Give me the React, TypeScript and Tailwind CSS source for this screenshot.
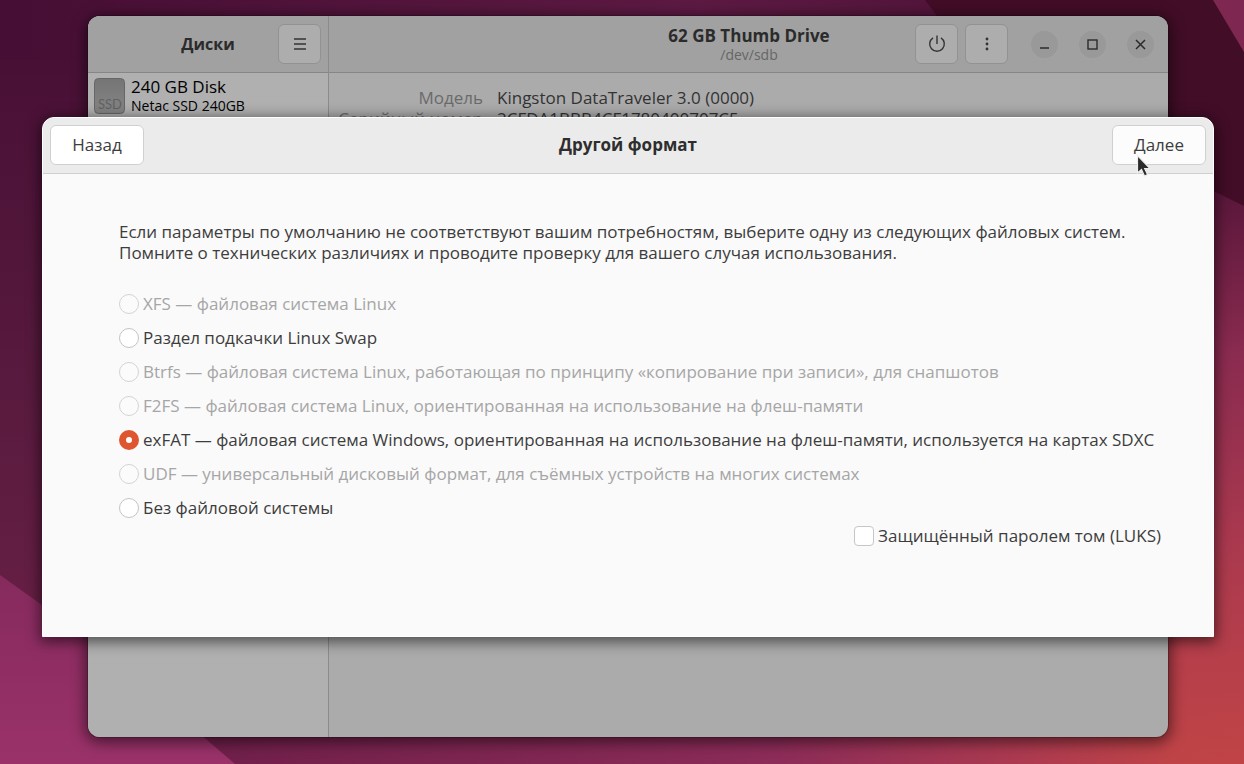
import { useState } from 'react';
import type { ReactNode } from 'react';
import clsx from 'clsx';

const filesystems = [
  { id: 'xfs', label: 'XFS — файловая система Linux', disabled: true },
  { id: 'swap', label: 'Раздел подкачки Linux Swap', disabled: false },
  { id: 'btrfs', label: 'Btrfs — файловая система Linux, работающая по принципу «копирование при записи», для снапшотов', disabled: true },
  { id: 'f2fs', label: 'F2FS — файловая система Linux, ориентированная на использование на флеш-памяти', disabled: true },
  { id: 'exfat', label: 'exFAT — файловая система Windows, ориентированная на использование на флеш-памяти, используется на картах SDXC', disabled: false },
  { id: 'udf', label: 'UDF — универсальный дисковый формат, для съёмных устройств на многих системах', disabled: true },
  { id: 'empty', label: 'Без файловой системы', disabled: false },
];

function Wallpaper() {
  return (
    <svg className="absolute inset-0 h-full w-full" viewBox="0 0 1244 764" preserveAspectRatio="none" aria-hidden="true">
      <defs>
        <linearGradient id="left" x1="0" y1="0" x2="0" y2="1">
          <stop offset="0" stopColor="#460e34" />
          <stop offset="0.5" stopColor="#581a3e" />
          <stop offset="1" stopColor="#6f2249" />
        </linearGradient>
        <linearGradient id="top" x1="0" y1="0" x2="1" y2="0">
          <stop offset="0" stopColor="#460e34" />
          <stop offset="0.7" stopColor="#5d1a43" />
          <stop offset="1" stopColor="#501439" />
        </linearGradient>
        <linearGradient id="right" gradientUnits="userSpaceOnUse" x1="1190" y1="180" x2="1230" y2="764">
          <stop offset="0" stopColor="#551538" />
          <stop offset="0.3" stopColor="#8a2b50" />
          <stop offset="0.65" stopColor="#ac3a4e" />
          <stop offset="1" stopColor="#c04446" />
        </linearGradient>
        <linearGradient id="bottom" gradientUnits="userSpaceOnUse" x1="190" y1="0" x2="1168" y2="0">
          <stop offset="0" stopColor="#6f1f4a" />
          <stop offset="0.6" stopColor="#8c2c58" />
          <stop offset="0.85" stopColor="#ac3a50" />
          <stop offset="1" stopColor="#be4347" />
        </linearGradient>
        <linearGradient id="corner" x1="0" y1="0" x2="0" y2="1">
          <stop offset="0" stopColor="#862a5e" />
          <stop offset="1" stopColor="#9a3269" />
        </linearGradient>
      </defs>
      <rect width="1244" height="764" fill="url(#left)" />
      <path d="M0 0H1000V60H0Z" fill="url(#top)" />
      <path d="M925 0H1244V230H1100Z" fill="#420d27" />
      <path d="M1213 0H1244V52Z" fill="#7d2751" />
      <path d="M1150 160L1244 206V764H1150Z" fill="url(#right)" />
      <path d="M190 700H1168V764H190Z" fill="url(#bottom)" />
      <path d="M0 575L88 638L235 764H0Z" fill="url(#corner)" />
    </svg>
  );
}

function HeaderButton({ label, children }: { label: string; children: ReactNode }) {
  return (
    <button
      type="button"
      aria-label={label}
      className="flex h-10 w-[43px] items-center justify-center rounded-md border border-[#929292] bg-[#adadad] text-[#333]"
    >
      {children}
    </button>
  );
}

function WindowButton({ label, children }: { label: string; children: ReactNode }) {
  return (
    <button
      type="button"
      aria-label={label}
      className="flex h-[27px] w-[27px] items-center justify-center rounded-full bg-[#999] text-[#2b2b2b]"
    >
      {children}
    </button>
  );
}

function DisksWindow() {
  return (
    <section className="absolute top-4 right-[76px] bottom-[27px] left-[88px] flex overflow-hidden rounded-xl bg-[#ababab] text-[#333] shadow-[0_3px_14px_3px_rgba(0,0,0,0.5)] ring-1 ring-black/20">
      <aside className="flex w-[241px] shrink-0 flex-col border-r border-[#8b8b8b] bg-[#b0b0b0]">
        <header className="flex h-[57px] shrink-0 items-center border-b border-[#868686] bg-[#a1a1a1] pr-[7px] pl-[50px]">
          <h1 className="flex-1 text-center text-base font-bold text-[#2b2b2b]">Диски</h1>
          <HeaderButton label="Меню">
            <svg width="14" height="14" viewBox="0 0 14 14" fill="none" stroke="currentColor" strokeWidth="1.3">
              <path d="M1 2H13M1 7H13M1 12H13" />
            </svg>
          </HeaderButton>
        </header>
        <div className="flex gap-1.5 px-1.5 pt-1 text-black">
          <svg className="mt-px shrink-0" width="31" height="36" viewBox="0 0 31 36" aria-hidden="true">
            <defs>
              <linearGradient id="drive" x1="0" y1="0" x2="0" y2="1">
                <stop offset="0" stopColor="#757575" />
                <stop offset="1" stopColor="#858585" />
              </linearGradient>
            </defs>
            <rect x="0.5" y="0.5" width="30" height="35" rx="4" fill="url(#drive)" stroke="#666" />
            <text x="4" y="31" fontSize="13" fill="#626262" fontFamily="Lato">SSD</text>
          </svg>
          <div className="whitespace-nowrap">
            <p className="text-[17px] leading-5">240 GB Disk</p>
            <p className="text-sm leading-[18px]">Netac SSD 240GB</p>
          </div>
        </div>
      </aside>
      <div className="flex min-w-0 flex-1 flex-col">
        <header className="flex h-[57px] shrink-0 items-center border-b border-[#868686] bg-[#a1a1a1] pr-3.5">
          <div className="flex-1 pl-[254px] text-center">
            <h2 className="text-[17px] leading-[21px] font-bold text-[#2b2b2b]">62 GB Thumb Drive</h2>
            <p className="text-sm leading-[18px] text-[#666]">/dev/sdb</p>
          </div>
          <div className="flex items-center gap-[7px]">
            <HeaderButton label="Отключить">
              <svg width="18" height="18" viewBox="0 0 18 18" fill="none" stroke="currentColor" strokeWidth="1.4">
                <path d="M9 0.5V9" />
                <path d="M5 2.8A7.3 7.3 0 1 0 13 2.8" />
              </svg>
            </HeaderButton>
            <HeaderButton label="Параметры диска">
              <svg width="4" height="14" viewBox="0 0 4 14" fill="currentColor">
                <circle cx="2" cy="2" r="1.4" />
                <circle cx="2" cy="7" r="1.4" />
                <circle cx="2" cy="12" r="1.4" />
              </svg>
            </HeaderButton>
          </div>
          <div className="ml-[23px] flex items-center gap-[21px]">
            <WindowButton label="Свернуть">
              <svg width="11" height="11" viewBox="0 0 11 11" stroke="currentColor" strokeWidth="1.4">
                <path d="M1 9H10" />
              </svg>
            </WindowButton>
            <WindowButton label="Развернуть">
              <svg width="11" height="11" viewBox="0 0 11 11" fill="none" stroke="currentColor" strokeWidth="1.4">
                <rect x="1" y="1" width="9" height="9" />
              </svg>
            </WindowButton>
            <WindowButton label="Закрыть">
              <svg width="11" height="11" viewBox="0 0 11 11" stroke="currentColor" strokeWidth="1.5">
                <path d="M1 1L10 10M10 1L1 10" />
              </svg>
            </WindowButton>
          </div>
        </header>
        <dl className="grid grid-cols-[154px_1fr] gap-x-3.5 pt-3.5 text-[17px] leading-[21px] whitespace-nowrap">
          <dt className="text-right text-[#6a6a6a]">Модель</dt>
          <dd>Kingston DataTraveler 3.0 (0000)</dd>
          <dt className="text-right text-[#6a6a6a]">Серийный номер</dt>
          <dd>2CFDA1BBB4CF1780400707C5</dd>
        </dl>
      </div>
    </section>
  );
}

function FormatDialog() {
  const [selected, setSelected] = useState('exfat');
  const [encrypted, setEncrypted] = useState(false);

  return (
    <section
      role="dialog"
      aria-labelledby="dialog-title"
      className="absolute top-[117px] right-[30px] left-[42px] overflow-hidden rounded-t-xl border border-white bg-[#fafafa] text-[17px] text-[#3d3d3d] shadow-[0_3px_14px_2px_rgba(0,0,0,0.55)]"
    >
      <header className="flex h-14 items-center justify-between border-b border-[#cfcfcf] bg-[#ebebeb] px-[7px] pb-px">
        <button type="button" className="h-10 w-[94px] rounded-md border border-[#d0d0d0] bg-white">
          Назад
        </button>
        <h2 id="dialog-title" className="font-bold text-[#2e2e2e]">Другой формат</h2>
        <button type="button" className="h-10 w-[94px] rounded-md border border-[#d0d0d0] bg-[#fcfcfc]">
          Далее
        </button>
      </header>
      <div className="pt-[47px] pr-[52px] pb-[89px] pl-[76px]">
        <p className="leading-[21px]">
          Если параметры по умолчанию не соответствуют вашим потребностям, выберите одну из следующих файловых систем.
          <br />
          Помните о технических различиях и проводите проверку для вашего случая использования.
        </p>
        <div role="radiogroup" aria-labelledby="dialog-title" className="mt-6">
          {filesystems.map((fs) => (
            <label
              key={fs.id}
              className={clsx('flex h-[34px] items-center gap-1 whitespace-nowrap', fs.disabled && 'text-[#a6a6a6]')}
            >
              <input
                type="radio"
                name="filesystem"
                value={fs.id}
                checked={selected === fs.id}
                disabled={fs.disabled}
                onChange={() => setSelected(fs.id)}
                className="h-5 w-5 shrink-0 appearance-none rounded-full border border-[#c4c4c4] bg-white checked:border-[7px] checked:border-[#dd5630] disabled:border-[#d4d4d4] disabled:bg-[#fbfbfb]"
              />
              {fs.label}
            </label>
          ))}
        </div>
        <div className="flex justify-end">
          <label className="flex h-[22px] items-center gap-1 whitespace-nowrap">
            <input
              type="checkbox"
              checked={encrypted}
              onChange={(e) => setEncrypted(e.target.checked)}
              className="h-5 w-5 shrink-0 appearance-none rounded-sm border border-[#c6c6c6] bg-white checked:bg-[#dd5630]"
            />
            Защищённый паролем том (LUKS)
          </label>
        </div>
      </div>
    </section>
  );
}

export default function App() {
  return (
    <main className="relative h-screen overflow-hidden bg-[#460e34] font-['Open_Sans','Noto_Sans',sans-serif]">
      <Wallpaper />
      <DisksWindow />
      <FormatDialog />
      {/* mouse pointer */}
      <svg className="pointer-events-none absolute top-[154px] left-[1136px]" width="16" height="24" viewBox="0 0 16 24" aria-hidden="true">
        <path d="M1.5 1.5V19L5.5 15.5L8.5 22L11.5 20.5L8.7 14.5H14Z" fill="#2a2a2a" stroke="#eee" strokeWidth="1.2" />
      </svg>
    </main>
  );
}
